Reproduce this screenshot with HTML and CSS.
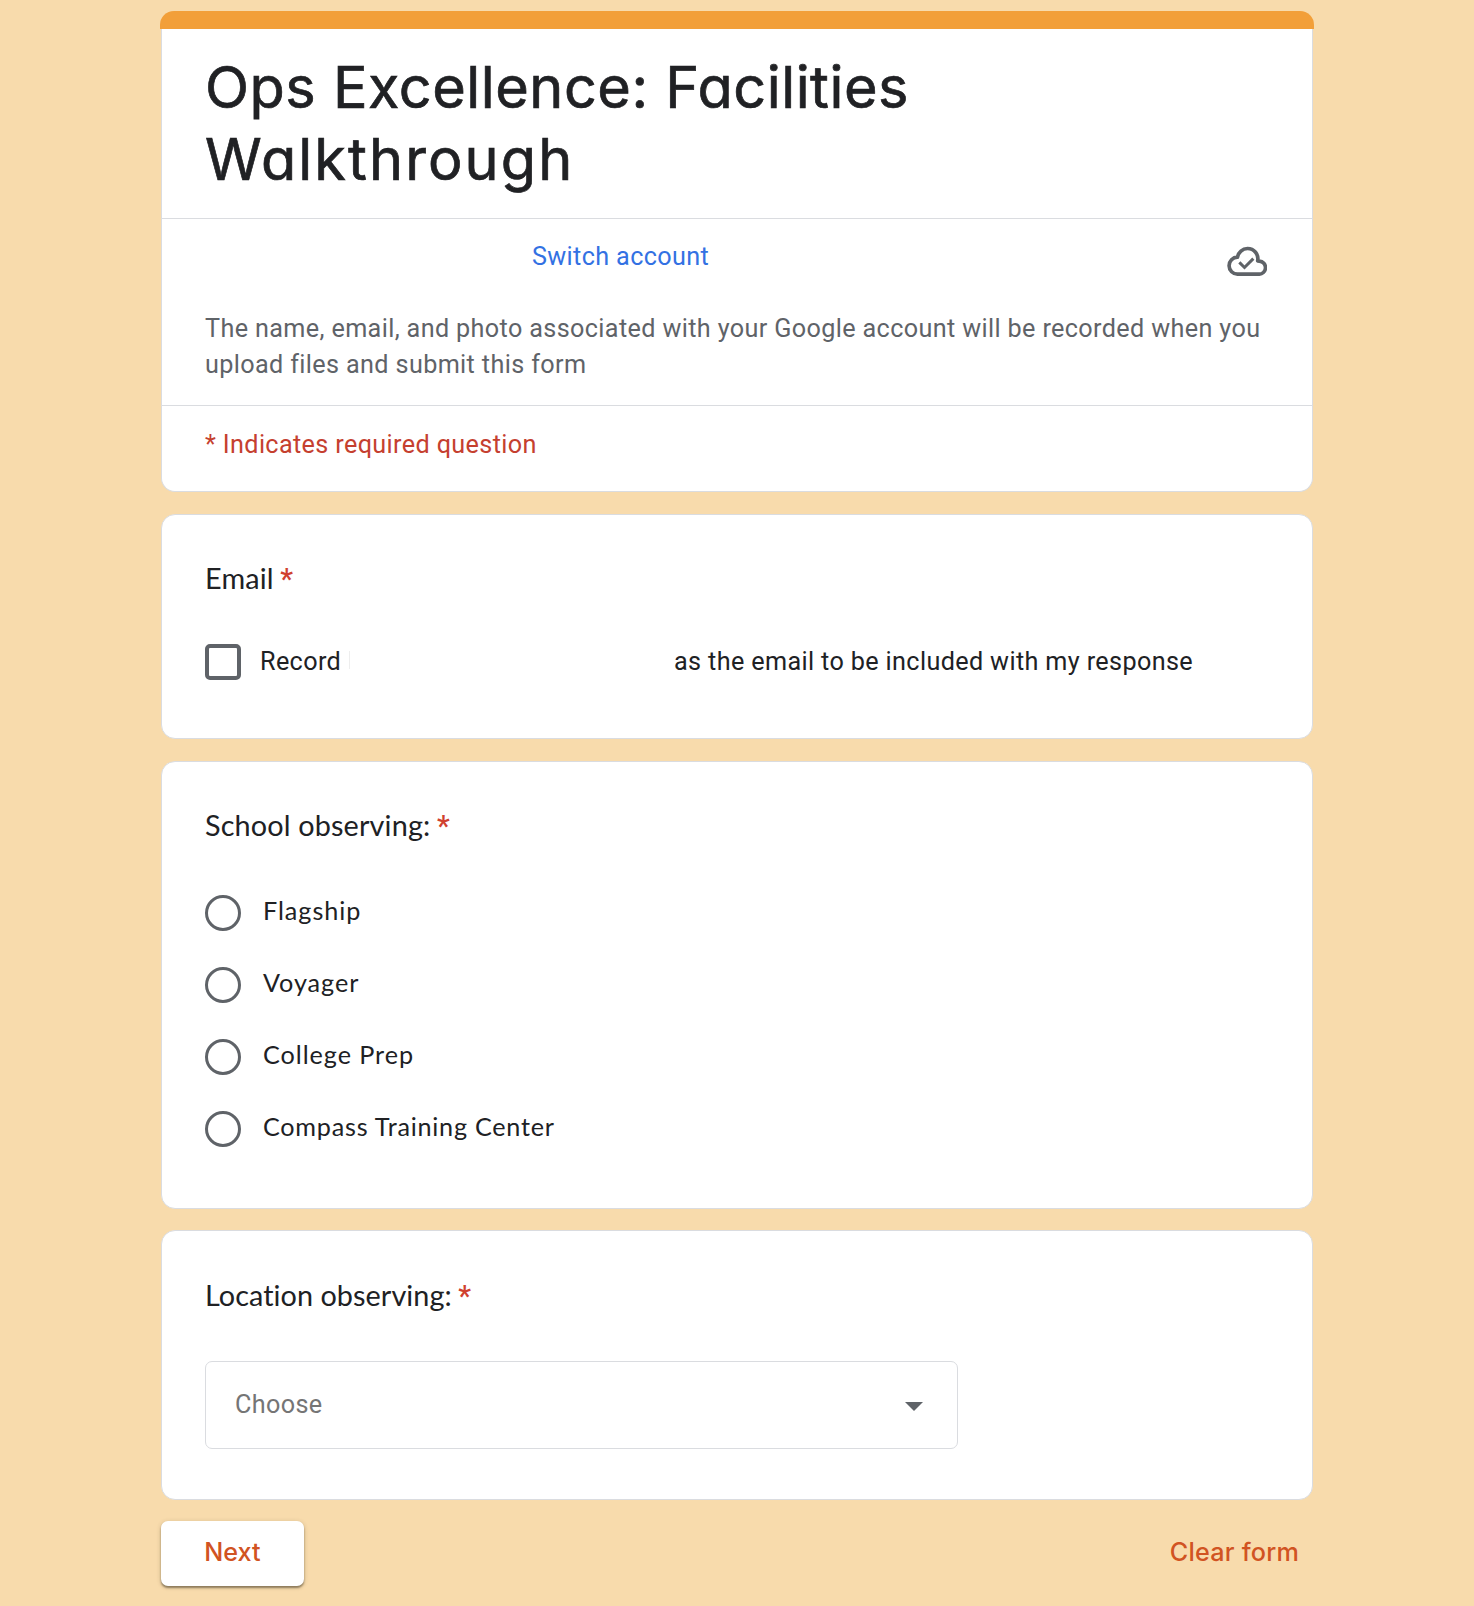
FILE: index.html
```html
<!DOCTYPE html>
<html lang="en">
<head>
<meta charset="utf-8">
<title>Ops Excellence: Facilities Walkthrough</title>
<link rel="stylesheet" href="styles.css">
</head>
<body>
<form class="form">
  <div class="accent"></div>
  <header class="card card--header">
    <h1 class="title"><span class="title__line">Ops Excellence: Facilities</span> <span class="title__line title__line--second">Walkthrough</span></h1>
    <section class="account">
      <div class="account__row">
        <a class="account__switch">Switch account</a>
        <svg class="account__cloud" viewBox="15 18 120 90" fill="none" stroke="#5f6368">
          <path stroke-width="11" stroke-linejoin="round" d="M47 102.500H110A19.500 19.500 0 0 0 112 63.500L107 62.700A31 31 0 0 0 76.500 25.500A31 31 0 0 0 46.500 51.500A25.500 25.500 0 0 0 47 102.500Z"/>
          <path stroke-width="9" d="M52 67L67.500 82.500L94 56"/>
        </svg>
      </div>
      <p class="account__note">The name, email, and photo associated with your Google account will be recorded when you upload files and submit this form</p>
    </section>
    <p class="required-note">* Indicates required question</p>
  </header>

  <section class="card card--email">
    <h2 class="question">Email <span class="star">*</span></h2>
    <label class="consent">
      <span class="checkbox"></span>
      <span class="consent__lead">Record</span>
      <span class="consent__mark"></span>
      <span class="consent__rest">as the email to be included with my response</span>
    </label>
  </section>

  <section class="card card--school">
    <h2 class="question">School observing: <span class="star">*</span></h2>
    <div class="options">
      <label class="option"><span class="radio"></span><span class="option__label">Flagship</span></label>
      <label class="option"><span class="radio"></span><span class="option__label">Voyager</span></label>
      <label class="option"><span class="radio"></span><span class="option__label">College Prep</span></label>
      <label class="option"><span class="radio"></span><span class="option__label option__label--long">Compass Training Center</span></label>
    </div>
  </section>

  <section class="card card--location">
    <h2 class="question question--location">Location observing: <span class="star">*</span></h2>
    <div class="select"><span>Choose</span><svg class="select__arrow" viewBox="0 0 18 9"><path fill="#5f6368" d="M0 0H18L9 9Z"/></svg></div>
  </section>

  <footer class="actions">
    <button class="next" type="button">Next</button>
    <button class="clear" type="button">Clear form</button>
  </footer>
</form>
</body>
</html>
```
FILE: styles.css
```css
* { box-sizing: border-box; }

body {
  margin: 0;
  min-height: 1606px;
  background: #f8dbac;
  color: #202124;
  font: 25.2px/36px Roboto, sans-serif;
  letter-spacing: 0.365px;
}

h1, h2, p { margin: 0; font-weight: 400; }

.form { width: 1152px; margin: 0 auto; padding-top: 11px; }

.accent {
  height: 18px;
  margin: 0 -1px;
  border-radius: 14px 14px 0 0;
  background: #f29f39;
}

.card {
  margin-bottom: 22px;
  padding: 41px 43px 0;
  border: 1px solid #dadce0;
  border-radius: 14px;
  background: #fff;
}

.card--header {
  height: 463px;
  padding: 0;
  border-top: 0;
  border-radius: 0 0 14px 14px;
}
.card--email { height: 225px; }
.card--school { height: 448px; margin-bottom: 21px; }
.card--location { height: 270px; margin-bottom: 21px; padding-top: 42px; }

.title {
  padding: 22px 43px 23px;
  font: 400 57.6px/72px Inter, sans-serif;
  font-feature-settings: "cv11";
  -webkit-text-stroke: 0.7px #202124;
}
.title__line { display: block; letter-spacing: 0.52px; }
.title__line--second { letter-spacing: 2.1px; }

.account {
  padding: 20px 43px 22px;
  border-top: 1px solid #dadce0;
  border-bottom: 1px solid #dadce0;
}
.account__row {
  display: flex;
  justify-content: space-between;
  align-items: flex-start;
  height: 72px;
  padding: 0 2px 0 327px;
}
.account__switch { color: #3371e3; }
.account__cloud { width: 40px; height: 30px; margin-top: 7px; }
.account__note { color: #5f6368; }

.required-note { padding: 21px 43px 0; color: #c5402f; }

.question {
  font: 400 28.8px/44px Lato, sans-serif;
  letter-spacing: 0.15px;
}
.question--location { letter-spacing: 0.06px; }
.star {
  margin-left: -1px;
  color: #d0412f;
  font-family: Roboto, sans-serif;
  font-weight: 500;
  line-height: 0;
}

.consent { display: flex; margin-top: 44px; line-height: 35px; }
.checkbox {
  width: 36px;
  height: 36px;
  border: 4px solid #5f6368;
  border-radius: 5px;
}
.consent__lead { width: 88px; margin-left: 19px; }
.consent__mark {
  width: 1px;
  height: 18px;
  margin: 7px 324px 0 1px;
  background: #eeeeee;
}

.options { display: grid; gap: 36px; margin-top: 48px; }
.option { display: flex; height: 36px; }
.radio {
  width: 36px;
  height: 36px;
  border: 3px solid #5f6368;
  border-radius: 50%;
}
.option__label {
  margin-left: 22px;
  font: 25.2px/31px Lato, sans-serif;
  letter-spacing: 0.95px;
}
.option__label--long { letter-spacing: 0.76px; }

.select {
  display: flex;
  justify-content: space-between;
  align-items: center;
  width: 753px;
  height: 88px;
  margin-top: 44px;
  padding: 0 34px 1px 29px;
  border: 1px solid #dadce0;
  border-radius: 7px;
  color: #757575;
}
.select__arrow { width: 18px; height: 9px; margin-top: 4px; }

.actions { display: flex; justify-content: space-between; height: 65px; }
.next, .clear {
  border: 0;
  padding: 0 0 4px;
  background: none;
  color: #d15322;
  font: 500 25.2px/36px Inter, sans-serif;
}
.next {
  width: 143px;
  border-radius: 7px;
  background: #fff;
  box-shadow: 0 2px 2px rgba(60, 50, 30, 0.5), 0 1px 5px rgba(60, 50, 30, 0.2);
}
.clear { padding-right: 14px; letter-spacing: 0.2px; }
```
